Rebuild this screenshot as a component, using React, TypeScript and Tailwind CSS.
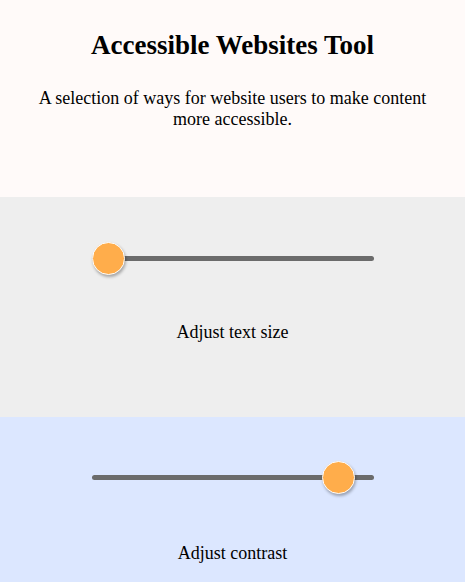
import { useState } from 'react';

type SliderProps = {
  value: number;
  onChange: (v: number) => void;
};

function Slider({ value, onChange }: SliderProps) {
  return (
    <div className="relative mx-auto h-[34px] w-[282px]">
      <div className="absolute left-0 right-0 top-[14px] h-[5px] rounded-full bg-[#6b6b6b]" />
      <input
        type="range"
        min={0}
        max={100}
        value={value}
        onChange={(e) => onChange(Number(e.target.value))}
        className="absolute inset-0 h-full w-full cursor-pointer opacity-0"
        aria-label="slider"
      />
      <div
        className="pointer-events-none absolute top-0 h-[33px] w-[33px] rounded-full border border-white bg-[#ffad4b] shadow-[1px_2px_3px_rgba(0,0,0,0.3)]"
        style={{ left: `${(value / 100) * 249}px` }}
      />
    </div>
  );
}

export default function App() {
  const [size, setSize] = useState(0);
  const [contrast, setContrast] = useState(92.5);

  return (
    <main className="h-[582px] overflow-hidden text-black [font-family:'Liberation_Serif',serif]">
      <header className="h-[197px] bg-[#fffaf9] px-8 pt-[29px] text-center">
        <h1 className="text-[27px] font-bold leading-[32px]">Accessible Websites Tool</h1>
        <p className="mx-auto mt-[27px] text-[18px] leading-[21px]">
          A selection of ways for website users to make content more accessible.
        </p>
      </header>

      <section className="h-[220px] bg-[#eeeeee] pt-[45px] text-center">
        <Slider value={size} onChange={setSize} />
        <p className="mt-[46px] text-[18px] leading-[21px]">Adjust text size</p>
      </section>

      <section className="h-[165px] bg-[#dce7ff] pt-[44px] text-center">
        <Slider value={contrast} onChange={setContrast} />
        <p className="mt-[48px] text-[18px] leading-[21px]">Adjust contrast</p>
      </section>
    </main>
  );
}
